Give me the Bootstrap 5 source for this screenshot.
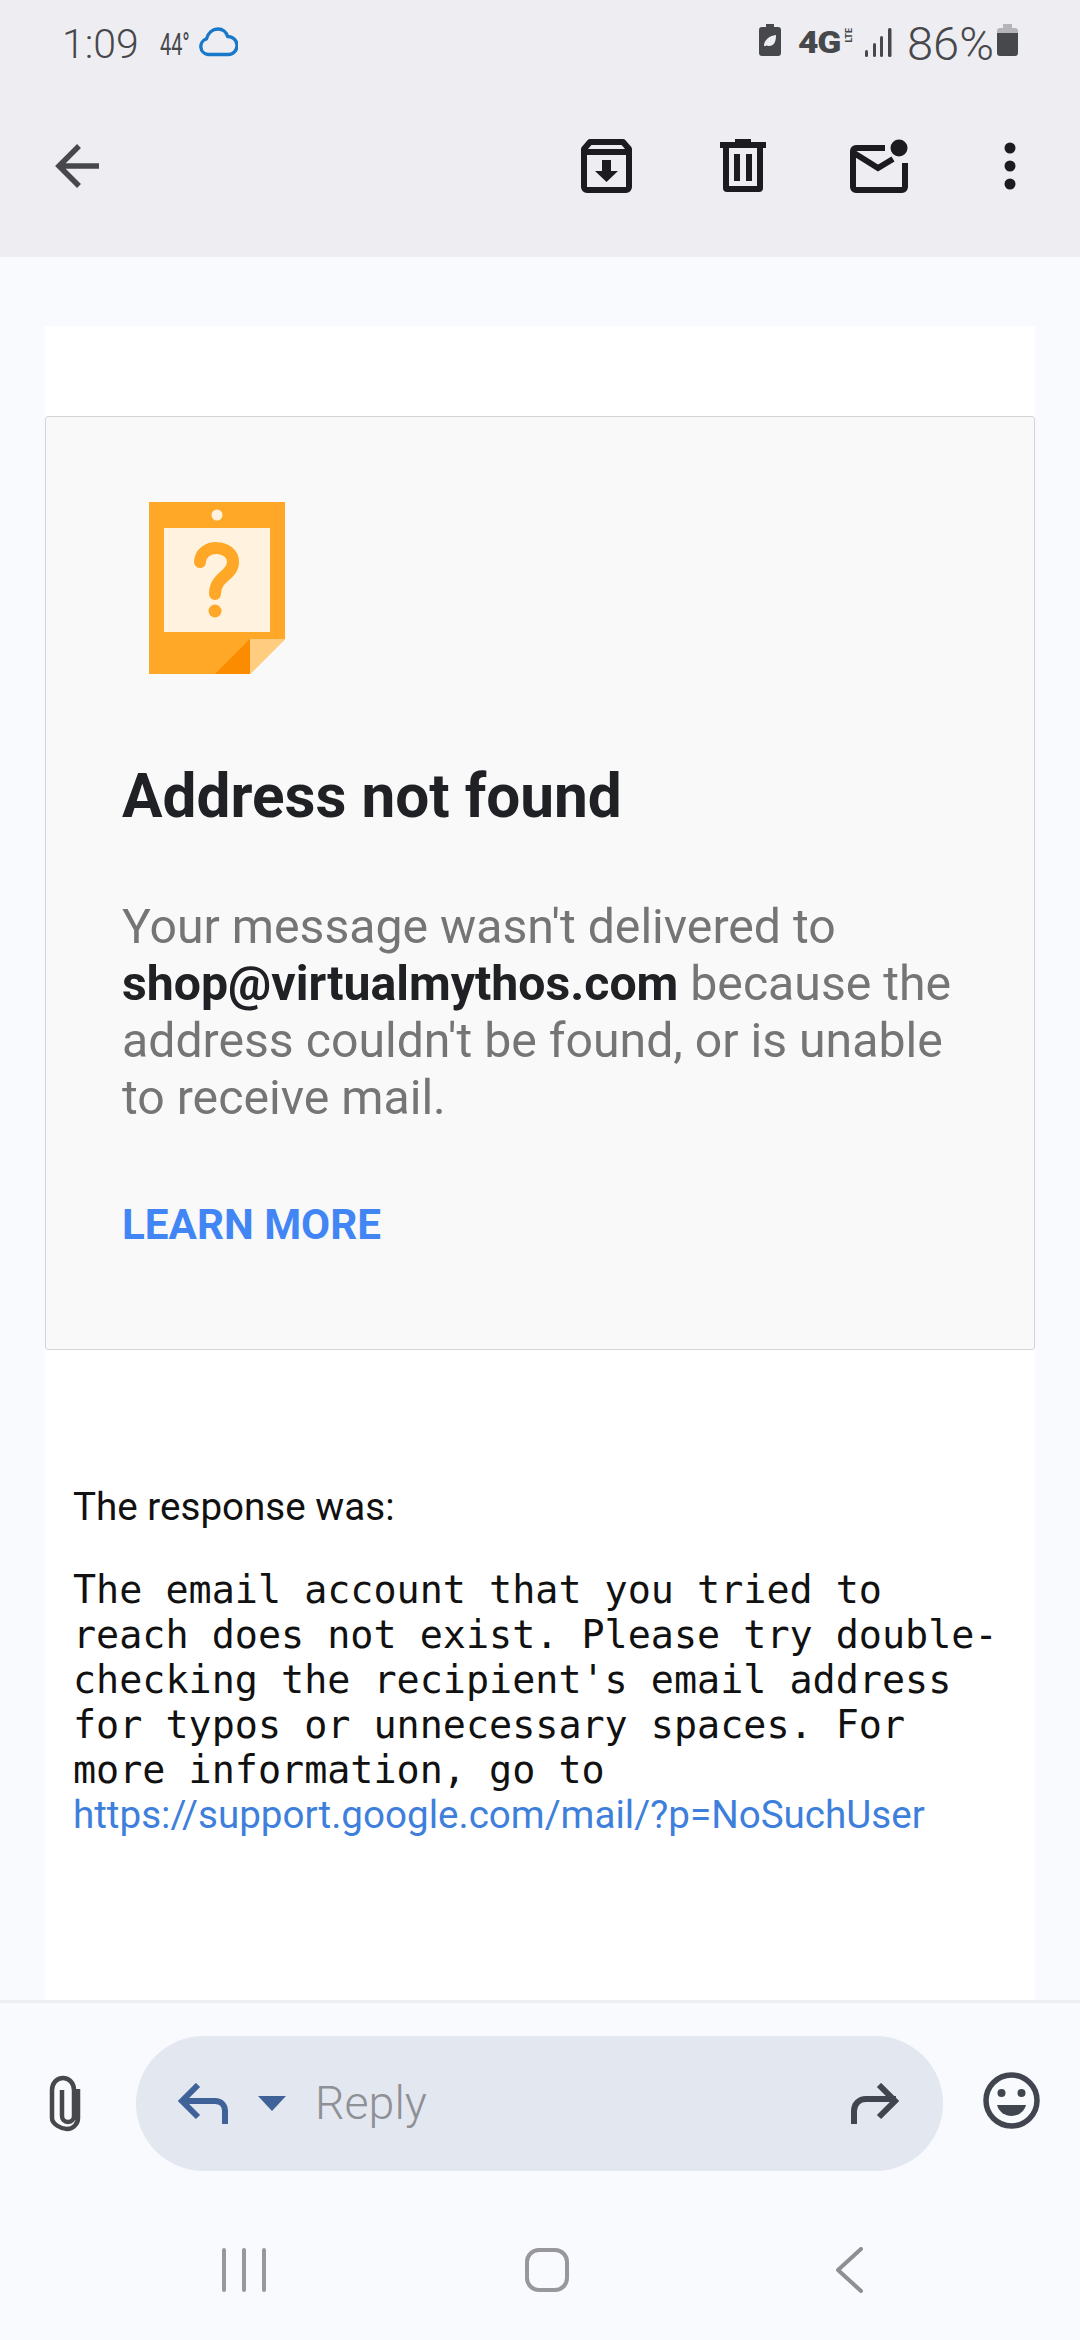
<!DOCTYPE html>
<html lang="en">
<head>
    <meta charset="UTF-8">
    <meta name="viewport" content="width=device-width, initial-scale=1.0">
    <title>Address not found</title>
    <link href="https://cdn.jsdelivr.net/npm/bootstrap@5.3.3/dist/css/bootstrap.min.css" rel="stylesheet">
    <script src="https://cdn.jsdelivr.net/npm/bootstrap@5.3.3/dist/js/bootstrap.bundle.min.js"></script>
    <style>
        html, body { height: 100%; }
        body { font-family: Roboto, sans-serif; background: #f9fafe; color: #202124; }
        svg { display: block; flex: none; }
        .app-shell { width: 1080px; height: 2340px; }

        /* top */
        .top-head { height: 257px; background: #eeeef2; }
        .status-row { height: 87px; padding: 24px 62px 0 62px; color: #47484c; }
        .clock { font-size: 41px; font-weight: 300; line-height: 40px; width: 76px; }
        .temp { font-size: 32px; line-height: 40px; width: 32px; margin-left: 22px; transform: scaleX(.62); transform-origin: left center; white-space: nowrap; }
        .cloud-ic { margin-left: 6px; margin-top: 3px; }
        .net-word { font-size: 31px; font-weight: 900; line-height: 30px; margin-left: 17px; margin-top: 4px; transform: scaleX(1.14); transform-origin: left center; width: 43px; letter-spacing: -1px; }
        .net-lte { font-size: 9px; font-weight: 700; line-height: 10px; width: 10px; margin-left: 3px; margin-top: 4px; writing-mode: vertical-rl; transform: rotate(180deg); }
        .signal-ic { margin-left: 11px; margin-top: 4px; }
        .pct { font-size: 47px; font-weight: 300; line-height: 40px; width: 85px; margin-left: 15px; white-space: nowrap; }
        .batt-ic { margin-left: 5px; }
        .tool-row { height: 170px; padding: 0 64px 12px 55px; }
        .tool-trash { margin-left: 88px; }
        .tool-mail { margin-left: 84px; }
        .tool-more { margin-left: 96px; }

        /* message */
        .msg-scroll { min-height: 0; padding: 69px 45px 0; overflow: hidden; }
        .msg-panel { background: #fff; height: 100%; padding-top: 90px; }
        .notice-box { height: 934px; background: #f9f9f9; border: 1px solid #d4d4d4; border-radius: 3px; padding: 85px 60px 0 76px; }
        .notice-art { margin-left: 27px; }
        .notice-title { font-size: 60.3px; font-weight: 700; line-height: 66px; margin: 90px 0 0; color: #202124; }
        .notice-text { font-size: 48.2px; line-height: 57px; color: #757575; margin: 68px 0 0; }
        .notice-text strong { color: #202124; font-weight: 700; }
        .learn-link { display: block; font-size: 42.2px; font-weight: 700; line-height: 50px; color: #4285f4; text-decoration: none; margin-top: 74px; }
        .resp-block { padding: 134px 30px 0 28px; }
        .resp-head { font-size: 38.6px; line-height: 46px; color: #111; margin: 0 0 37px; }
        .resp-mono { font-family: "DejaVu Sans Mono", monospace; font-size: 38.4px; line-height: 45px; color: #111; margin: 0; }
        .resp-link { font-family: Roboto, sans-serif; font-size: 38.6px; color: #3f7fdc; text-decoration: none; }

        /* bottom */
        .reply-area { height: 204px; padding: 33px 40px 0 49px; background: #f9fafe; border-top: 3px solid #eeeef0; }
        .attach-ic { margin-top: 39px; }
        .reply-pill { width: 813px; height: 135px; margin: 0 40px 0 49px; padding: 0 42px; background: #e3e7f0; border-radius: 68px; }
        .caret-ic { margin-left: 30px; }
        .reply-word { font-size: 46.5px; font-weight: 300; color: #8f9095; margin-left: 29px; line-height: 1; }
        .smile-ic { margin-top: 36px; }
        .nav-row { height: 136px; padding-bottom: 4px; background: #f9fafe; }
        .nav-recent { margin-left: 222px; }
        .nav-home { margin-left: 259px; }
        .nav-back { margin-left: 266px; }
    </style>
</head>
<body>
<div class="app-shell d-flex flex-column">
    <header class="top-head flex-shrink-0">
        <div class="status-row d-flex align-items-start">
            <span class="clock">1:09</span>
            <span class="temp">44°</span>
            <svg class="cloud-ic" width="40" height="30" viewBox="0 0 40 30"><path d="M10 27.500a8 8 0 0 1-1.500-15.600C10 6 14.500 2 20 2c4.500 0 8.500 3 9.500 7.500a9 9 0 0 1 1 18z" fill="none" stroke="#1a78c9" stroke-width="3.400" stroke-linejoin="round"/></svg>
            <div class="ms-auto d-flex align-items-start">
                <svg width="22" height="32" viewBox="0 0 22 32"><path d="M7 0h8v3h4a3 3 0 0 1 3 3v23a3 3 0 0 1-3 3H3a3 3 0 0 1-3-3V6a3 3 0 0 1 3-3h4z" fill="#47484c"/><path d="M5 22c0-6 5-10 12-11 0 7-2 11-7 11-1 0-2 0-2-1l4-4-5 5z" fill="#eeeef2"/></svg>
                <span class="net-word">4G</span>
                <span class="net-lte">LTE</span>
                <svg class="signal-ic" width="27" height="29" viewBox="0 0 27 29"><g fill="#47484c"><rect x="0" y="22" width="3" height="7" rx="1.500"/><rect x="8" y="15" width="3" height="14" rx="1.500"/><rect x="15" y="8" width="3" height="21" rx="1.500"/><rect x="23" y="0" width="3.500" height="29" rx="1.500"/></g></svg>
                <span class="pct">86%</span>
                <svg class="batt-ic" width="21" height="32" viewBox="0 0 21 32"><path d="M6 0h9v4h3a3 3 0 0 1 3 3v2H0V7a3 3 0 0 1 3-3h3z" fill="#b5b5b8"/><path d="M0 9h21v20a3 3 0 0 1-3 3H3a3 3 0 0 1-3-3z" fill="#47484c"/></svg>
            </div>
        </div>
        <div class="tool-row d-flex align-items-center">
            <svg width="46" height="46" viewBox="0 0 46 46"><path d="M44 23H5M24 3 4 23l20 20" fill="none" stroke="#47484c" stroke-width="5.500"/></svg>
            <div class="ms-auto d-flex align-items-center">
                <svg width="51" height="54" viewBox="0 0 51 54"><path d="M9 3h33l6 7v38a3 3 0 0 1-3 3H6a3 3 0 0 1-3-3V10zM3 13h45" fill="none" stroke="#1c1c20" stroke-width="6" stroke-linejoin="round"/><path d="M21 21h9v11h7L25.500 43 14 32h7z" fill="#1c1c20"/></svg>
                <svg class="tool-trash" width="46" height="54" viewBox="0 0 46 54"><path d="M15 0h16v3h15v6H0V3h15zM3 8h6v39h28V8h6v41a4 4 0 0 1-4 4H7a4 4 0 0 1-4-4zM14 15h6v27h-6zM26 15h6v27h-6z" fill="#1c1c20"/></svg>
                <svg class="tool-mail" width="58" height="54" viewBox="0 0 58 54"><path d="M35 9H6a3 3 0 0 0-3 3v36a3 3 0 0 0 3 3h46a3 3 0 0 0 3-3V24M4 14l24 15 15-9" fill="none" stroke="#1c1c20" stroke-width="6"/><circle cx="49" cy="9" r="8.500" fill="#1c1c20"/></svg>
                <svg class="tool-more" width="12" height="48" viewBox="0 0 12 48"><g fill="#1c1c20"><circle cx="6" cy="6" r="5.500"/><circle cx="6" cy="24" r="5.500"/><circle cx="6" cy="42" r="5.500"/></g></svg>
            </div>
        </div>
    </header>

    <main class="msg-scroll flex-grow-1">
        <div class="msg-panel">
            <section class="notice-box">
                <svg class="notice-art" width="136" height="172" viewBox="0 0 136 172">
                    <path d="M0 0h136v137l-35 35H0z" fill="#ffa726"/>
                    <path d="M101 137h35l-35 35z" fill="#ffcc80"/>
                    <path d="M101 137v35H66z" fill="#fb8c00"/>
                    <circle cx="68" cy="13" r="5.500" fill="#fff3e0"/>
                    <rect x="15" y="26" width="106" height="104" fill="#fff3e0"/>
                    <path d="M51 60C52 41 84 42 84 60c0 14-18 14-18 32" fill="none" stroke="#ffa726" stroke-width="12" stroke-linecap="round"/>
                    <circle cx="66" cy="109" r="6.500" fill="#ffa726"/>
                </svg>
                <h1 class="notice-title">Address not found</h1>
                <p class="notice-text">Your message wasn't delivered to <strong>shop@virtualmythos.com</strong> because the address couldn't be found, or is unable to receive mail.</p>
                <a class="learn-link" href="#">LEARN MORE</a>
            </section>
            <section class="resp-block">
                <p class="resp-head">The response was:</p>
                <p class="resp-mono">The email account that you tried to reach does not exist. Please try double-checking the recipient's email address for typos or unnecessary spaces. For more information, go to <a class="resp-link" href="#">https://support.google.com/mail/?p=NoSuchUser</a></p>
            </section>
        </div>
    </main>

    <footer class="flex-shrink-0">
        <div class="reply-area d-flex align-items-start">
            <svg class="attach-ic" width="38" height="58" viewBox="0 0 38 58"><path d="M29 14v29c0 6-5 11-11 11S3 49 3 43V15C3 8 8 3 14 3s11 5 11 12v26c0 3-2 6-6 6s-6-3-6-6V15" fill="none" stroke="#47484c" stroke-width="4.500"/></svg>
            <div class="reply-pill d-flex align-items-center">
                <svg width="50" height="42" viewBox="0 0 50 42"><path d="M20 2 4 18l16 16M5 18h32c6 0 10 4 10 10v13" fill="none" stroke="#3f6298" stroke-width="6"/></svg>
                <svg class="caret-ic" width="28" height="15" viewBox="0 0 28 15"><path d="M0 0h28L14 15z" fill="#3f6298"/></svg>
                <span class="reply-word">Reply</span>
                <svg class="ms-auto" width="52" height="42" viewBox="0 0 52 42"><path d="M30 2l16 16-16 16M47 16H17C10 16 5 21 5 28v13" fill="none" stroke="#41454f" stroke-width="6"/></svg>
            </div>
            <svg class="smile-ic" width="57" height="57" viewBox="0 0 57 57"><circle cx="28.500" cy="28.500" r="25.500" fill="none" stroke="#41454f" stroke-width="5.500"/><circle cx="18.500" cy="21" r="4" fill="#41454f"/><circle cx="38.500" cy="21" r="4" fill="#41454f"/><path d="M14 33h29c-2 7-8 11-14.500 11S16 40 14 33z" fill="#41454f"/></svg>
        </div>
        <div class="nav-row d-flex align-items-center">
            <svg class="nav-recent" width="44" height="44" viewBox="0 0 44 44"><path d="M2 2v40M22 2v40M42 2v40" stroke="#98989c" stroke-width="4" stroke-linecap="round"/></svg>
            <svg class="nav-home" width="44" height="44" viewBox="0 0 44 44"><rect x="2" y="2" width="40" height="40" rx="12" fill="none" stroke="#98989c" stroke-width="4"/></svg>
            <svg class="nav-back" width="30" height="46" viewBox="0 0 30 46"><path d="M26 2 3 23l23 21" fill="none" stroke="#8f8f93" stroke-width="4" stroke-linecap="round" stroke-linejoin="round"/></svg>
        </div>
    </footer>
</div>
</body>
</html>
